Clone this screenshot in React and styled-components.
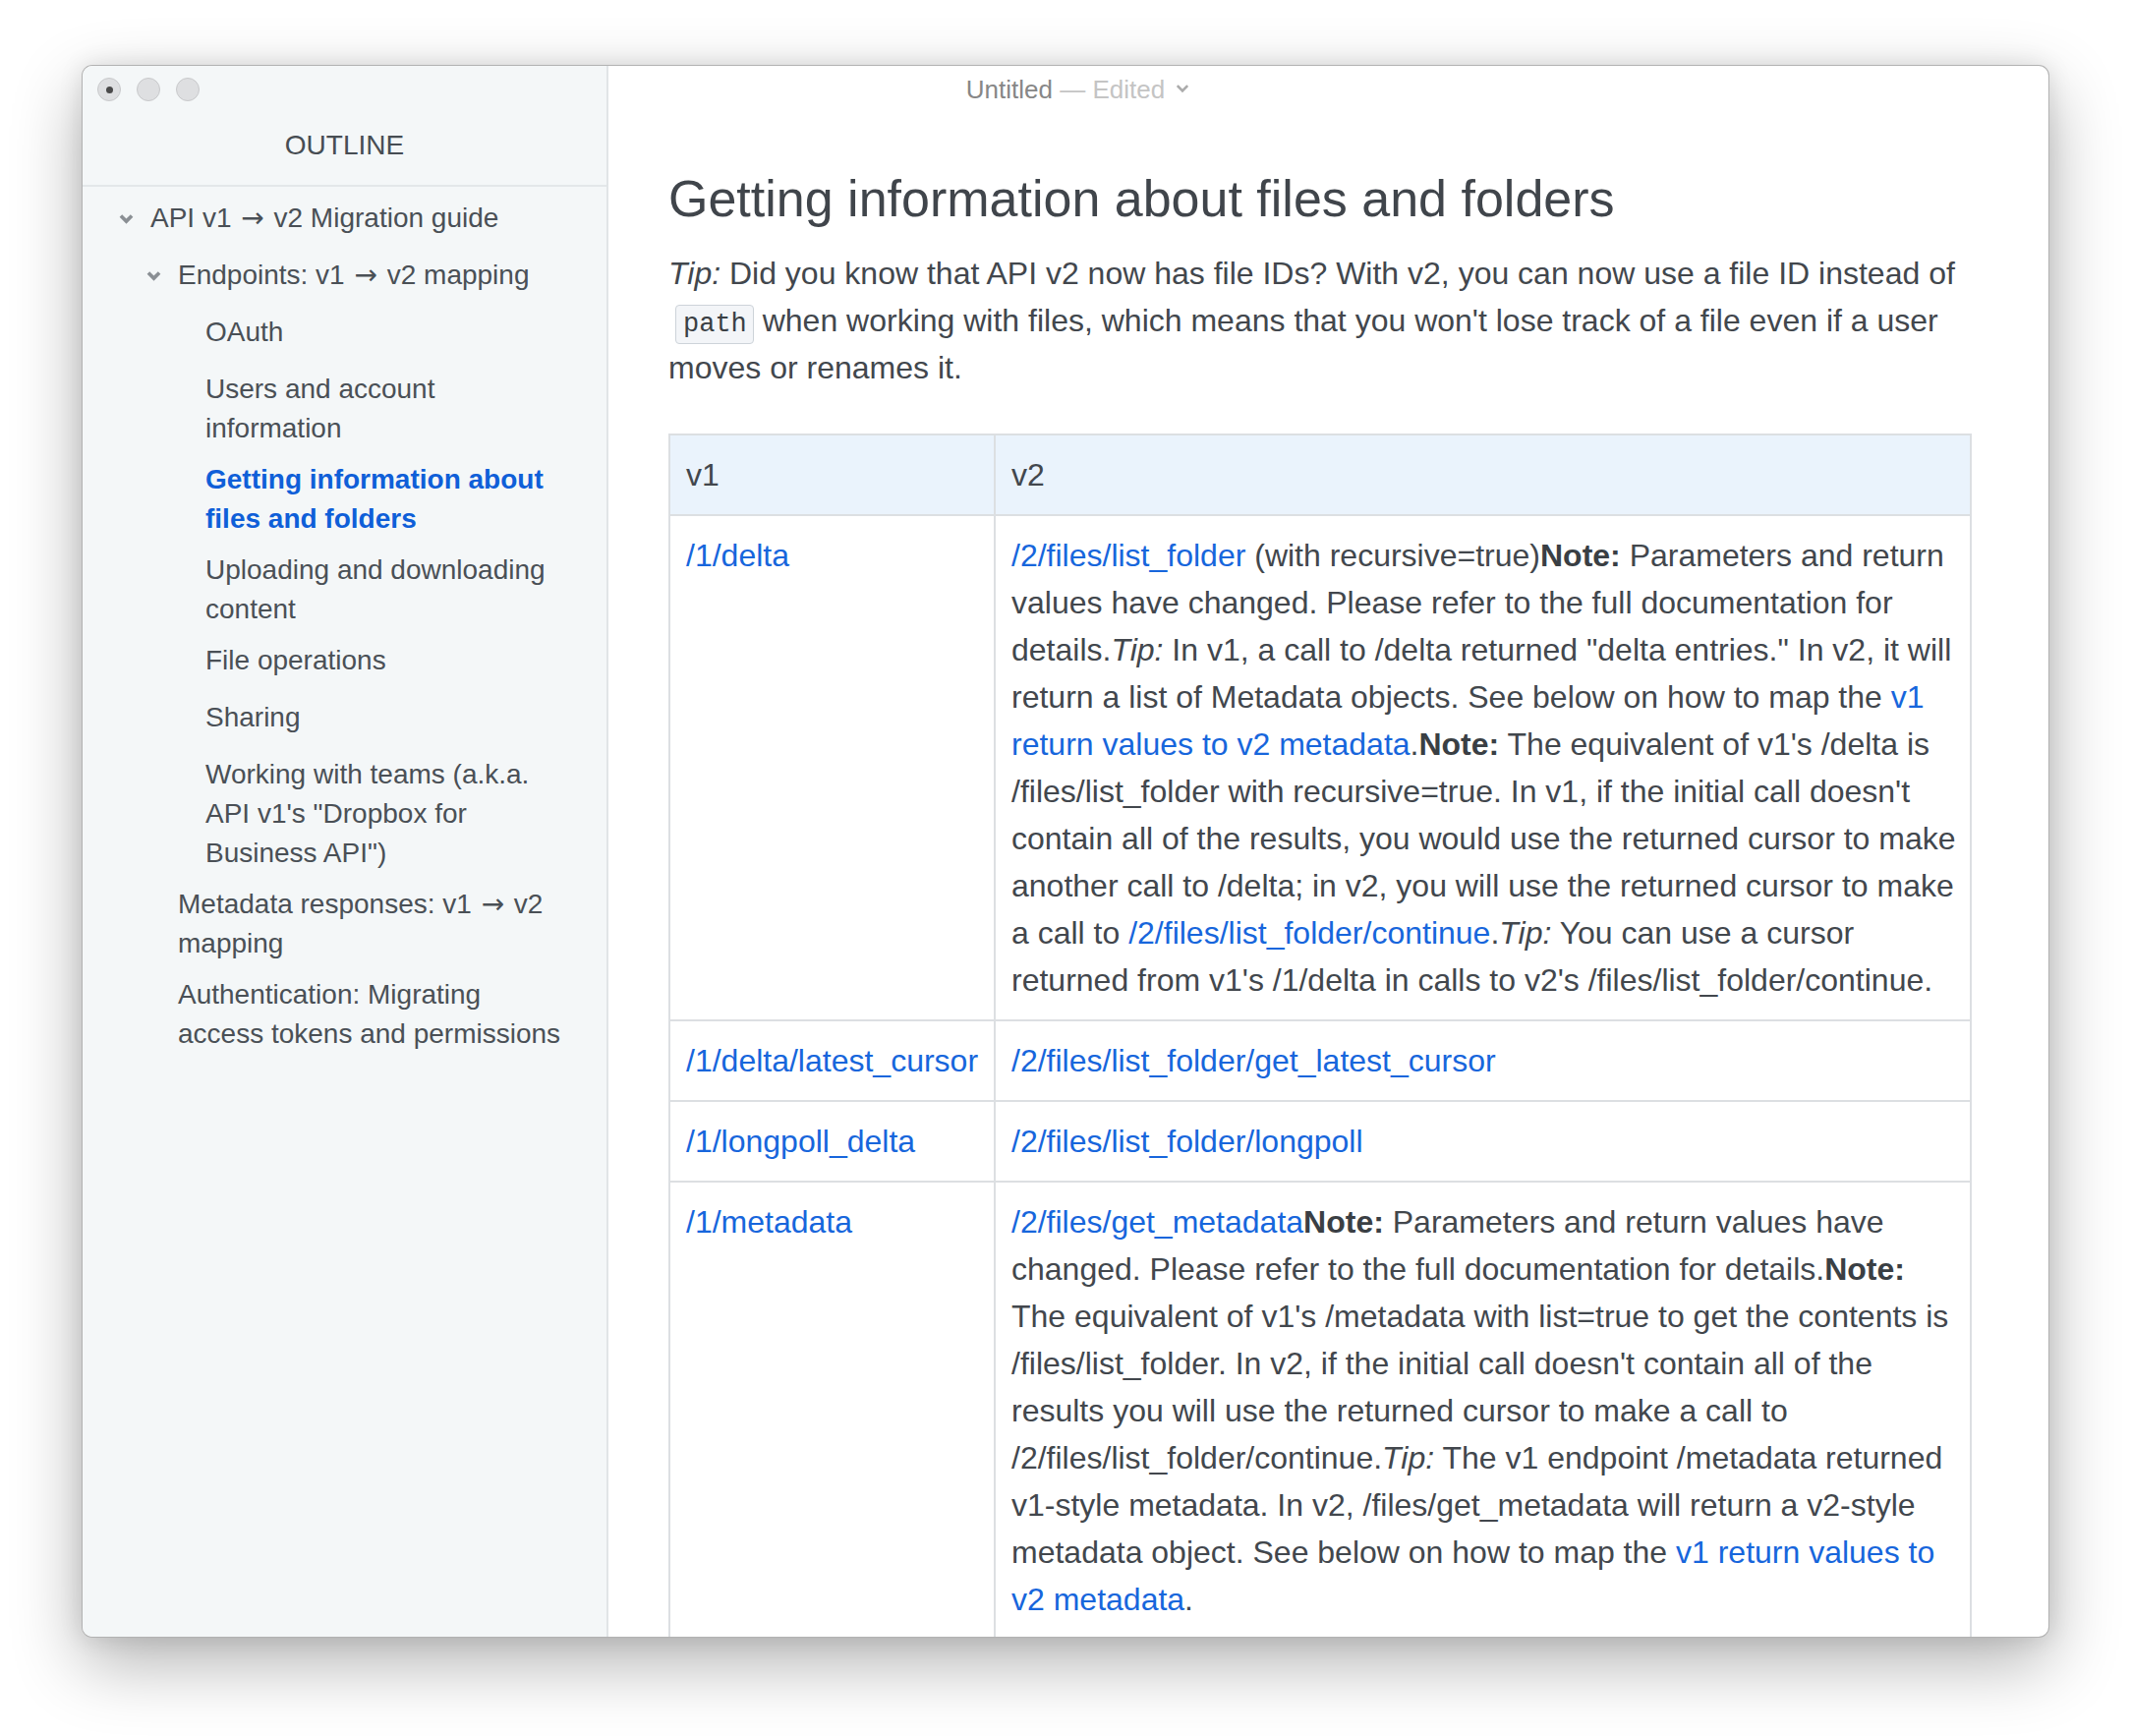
import React from 'react'
import styled, { createGlobalStyle } from 'styled-components'

const GlobalStyle = createGlobalStyle`
  html, body {
    margin: 0;
    padding: 0;
    background: #fff;
  }
  body {
    font-family: "Liberation Sans", Arial, sans-serif;
  }
`

const outline = [
  { label: 'API v1 → v2 Migration guide', level: 1, open: true },
  { label: 'Endpoints: v1 → v2 mapping', level: 2, open: true },
  { label: 'OAuth', level: 3 },
  { label: 'Users and account information', level: 3 },
  { label: 'Getting information about files and folders', level: 3, active: true },
  { label: 'Uploading and downloading content', level: 3 },
  { label: 'File operations', level: 3 },
  { label: 'Sharing', level: 3 },
  { label: 'Working with teams (a.k.a. API v1\'s "Dropbox for Business API")', level: 3 },
  { label: 'Metadata responses: v1 → v2 mapping', level: 2 },
  { label: 'Authentication: Migrating access tokens and permissions', level: 2 },
]

const indent = { 1: 69, 2: 97, 3: 125 }

const Caret = ({ size = 15, color = '#8a8f94', weight = 3.4 }) => (
  <svg width={size} height={Math.round(size * 0.7)} viewBox="0 0 14 10">
    <path d="M1.8 2.2 L7 7.4 L12.2 2.2" fill="none" stroke={color} strokeWidth={weight} />
  </svg>
)

// the arrow glyph in Liberation Sans is tiny, DejaVu draws it like the reference
const withArrows = text => text.split('→').flatMap((part, i) => (
  i === 0 ? [part] : [<Arrow key={i}>→</Arrow>, part]
))

const App = () => (
  <Page>
    <GlobalStyle />
    <Window>
      <TitleBar>
        <Lights>
          <Light><Dot /></Light>
          <Light />
          <Light />
        </Lights>
        <Title>
          Untitled <Edited>— Edited</Edited>
          <TitleCaret><Caret size={14} color="#ababab" weight={2.6} /></TitleCaret>
        </Title>
        <span />
      </TitleBar>

      <Sidebar>
        <SidebarHeader>OUTLINE</SidebarHeader>
        <OutlineList>
          {outline.map(item => (
            <OutlineItem key={item.label} $indent={indent[item.level]} $active={item.active}>
              {item.open && (
                <CaretSlot><Caret /></CaretSlot>
              )}
              <span>{withArrows(item.label)}</span>
            </OutlineItem>
          ))}
        </OutlineList>
      </Sidebar>

      <Main>
        <Heading>Getting information about files and folders</Heading>
        <Paragraph>
          <em>Tip:</em> Did you know that API v2 now has file IDs? With v2, you can now use a file ID instead of
          <Code>path</Code>{' '}when working with files, which means that you won't lose track of a file even if a
          user moves or renames it.
        </Paragraph>

        <Table>
          <colgroup>
            <Col $w={331} />
            <Col />
          </colgroup>
          <thead>
            <tr>
              <HeadCell>v1</HeadCell>
              <HeadCell>v2</HeadCell>
            </tr>
          </thead>
          <tbody>
            <tr>
              <Cell><Link>/1/delta</Link></Cell>
              <Cell>
                <Link>/2/files/list_folder</Link> (with recursive=true)<b>Note:</b> Parameters and return values
                have changed. Please refer to the full documentation for details.<em>Tip:</em> In v1, a call to /delta
                returned "delta entries." In v2, it will return a list of Metadata objects. See below on how to map
                the <Link>v1 return values to v2 metadata</Link>.<b>Note:</b> The equivalent of v1's /delta is
                /files/list_folder with recursive=true. In v1, if the initial call doesn't contain all of the results,
                you would use the returned cursor to make another call to /delta; in v2, you will use the returned
                cursor to make a call to <Link>/2/files/list_folder/continue</Link>.<em>Tip:</em> You can use a cursor
                returned from v1's /1/delta in calls to v2's /files/list_folder/continue.
              </Cell>
            </tr>
            <tr>
              <Cell><Link>/1/delta/latest_cursor</Link></Cell>
              <Cell><Link>/2/files/list_folder/get_latest_cursor</Link></Cell>
            </tr>
            <tr>
              <Cell><Link>/1/longpoll_delta</Link></Cell>
              <Cell><Link>/2/files/list_folder/longpoll</Link></Cell>
            </tr>
            <tr>
              <Cell><Link>/1/metadata</Link></Cell>
              <Cell>
                <Link>/2/files/get_metadata</Link><b>Note:</b> Parameters and return values have changed. Please
                refer to the full documentation for details.<b>Note:</b> The equivalent of v1's /metadata with
                list=true to get the contents is /files/list_folder. In v2, if the initial call doesn't contain all of
                the results you will use the returned cursor to make a call to
                /2/files/list_folder/continue.<em>Tip:</em> The v1 endpoint /metadata returned v1-style metadata. In
                v2, /files/get_metadata will return a v2-style metadata object. See below on how to map
                the <Link>v1 return values to v2 metadata</Link>.
              </Cell>
            </tr>
          </tbody>
        </Table>
      </Main>
    </Window>
  </Page>
)

const Page = styled.div`
  width: 2168px;
  height: 1766px;
  box-sizing: border-box;
  padding: 66px 83px 100px 83px;
  background: #fff;
`
const Window = styled.div`
  position: relative;
  display: flex;
  width: 2002px;
  height: 1600px;
  box-sizing: border-box;
  border: 1px solid rgba(0, 0, 0, 0.3);
  border-radius: 11px;
  overflow: hidden;
  background: #fff;
  box-shadow: 0 26px 70px rgba(0, 0, 0, 0.3), 0 0 24px rgba(0, 0, 0, 0.1);
`
const TitleBar = styled.div`
  position: absolute;
  top: 0;
  left: 0;
  right: 0;
  height: 48px;
  display: grid;
  grid-template-columns: 1fr auto 1fr;
  align-items: center;
  z-index: 2;
`
const Lights = styled.div`
  display: flex;
  gap: 16px;
  padding-left: 15px;
`
const Light = styled.span`
  width: 24px;
  height: 24px;
  box-sizing: border-box;
  border-radius: 50%;
  background: #dedfe1;
  border: 1px solid #c8c9cb;
  display: flex;
  align-items: center;
  justify-content: center;
`
const Dot = styled.span`
  width: 7px;
  height: 7px;
  border-radius: 50%;
  background: #4a4a4a;
`
const Title = styled.div`
  position: relative;
  font-size: 26px;
  line-height: 48px;
  color: #878787;
  white-space: nowrap;
`
const Edited = styled.span`
  color: #c4c4c4;
`
const TitleCaret = styled.span`
  position: absolute;
  left: calc(100% + 11px);
  top: 18px;
  display: flex;
`
const Sidebar = styled.aside`
  width: 535px;
  flex: none;
  box-sizing: border-box;
  background: #f4f7f8;
  border-right: 2px solid #e1e5e7;
  display: flex;
  flex-direction: column;
`
const SidebarHeader = styled.div`
  padding: 61px 0 20px;
  font-size: 28px;
  line-height: 40px;
  text-align: center;
  color: #474d53;
  border-bottom: 2px solid #e3e7e9;
`
const OutlineList = styled.div`
  padding: 12px 41px 0 0;
  display: flex;
  flex-direction: column;
  gap: 12px;
`
const OutlineItem = styled.div`
  display: flex;
  align-items: flex-start;
  min-height: 46px;
  padding-left: ${p => p.$indent}px;
  font-size: 28px;
  line-height: 40px;
  color: ${p => (p.$active ? '#0f5fd8' : '#4a5056')};
  font-weight: ${p => (p.$active ? 700 : 400)};
`
const CaretSlot = styled.span`
  flex: none;
  width: 32px;
  margin-left: -32px;
  height: 40px;
  display: flex;
  align-items: center;
`
const Arrow = styled.span`
  font-family: "DejaVu Sans", sans-serif;
  font-weight: 400;
  margin: 0 2px;
`
const Main = styled.main`
  flex: 1;
  min-width: 0;
  padding: 103px 78px 0 61px;
  overflow: hidden;
  color: #42474d;
`
const Heading = styled.h2`
  margin: 0 0 20px;
  font-size: 52px;
  line-height: 64px;
  font-weight: 400;
  color: #40454b;
`
const Paragraph = styled.p`
  margin: 0 0 43px;
  font-size: 32px;
  line-height: 48px;
`
const Code = styled.code`
  display: inline-block;
  margin: 0 0 0 7px;
  padding: 0 6px 0 7px;
  font-family: "Liberation Mono", "DejaVu Sans Mono", monospace;
  font-size: 27px;
  line-height: 38px;
  color: #3a3f44;
  background: #f3f5f8;
  border: 1px solid #cdd3d9;
  border-radius: 4px;
`
const Table = styled.table`
  width: 100%;
  table-layout: fixed;
  border-collapse: collapse;
  font-size: 32px;
  line-height: 48px;
  color: #42474d;
`
const Col = styled.col`
  width: ${p => (p.$w ? `${p.$w}px` : 'auto')};
`
const HeadCell = styled.th`
  padding: 16px 12px 16px 16px;
  border: 2px solid #dcdfe2;
  background: #eaf3fc;
  text-align: left;
  font-weight: 400;
`
const Cell = styled.td`
  padding: 16px 12px 16px 16px;
  border: 2px solid #dcdfe2;
  vertical-align: top;
  b {
    color: #3a3f44;
  }
`
const Link = styled.span`
  color: #1766dc;
`

export default App
